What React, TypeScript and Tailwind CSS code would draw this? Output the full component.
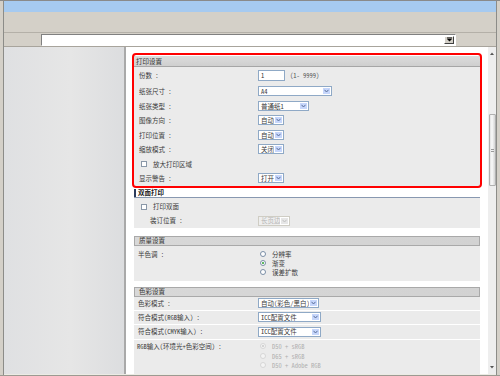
import React from "react";

function Chev({ color = "#4b5f8c" }: { color?: string }) {
  return (
    <svg width="5" height="4" viewBox="0 0 5 4">
      <path d="M0.5 0.8 L2.5 3 L4.5 0.8" stroke={color} strokeWidth="1" fill="none" />
    </svg>
  );
}

function Select({ wc, text, disabled }: { wc: string; text: string; disabled?: boolean }) {
  return (
    <div
      className={
        "flex h-[10px] items-stretch border " +
        wc +
        (disabled ? " border-[#cfcdc4] bg-[#eeeeee]" : " border-[#8fa9c6] bg-white")
      }
    >
      <div
        className={
          "flex-1 flex items-center pl-[2px] leading-none whitespace-nowrap overflow-hidden " +
          (disabled ? "text-[#b5b5b5]" : "text-[#3a3a3a]")
        }
      >
        {text}
      </div>
      <div
        className={
          "w-[9px] flex items-center justify-center border border-white " +
          (disabled ? "bg-[#e6e6e6]" : "bg-[#c6d6fb]")
        }
      >
        <Chev color={disabled ? "#c0c0c0" : "#5a6e98"} />
      </div>
    </div>
  );
}

function Checkbox() {
  return <div className="w-[6px] h-[6px] border border-[#8a98a8] bg-white" />;
}

function Radio({ checked, disabled }: { checked?: boolean; disabled?: boolean }) {
  return (
    <div
      className={
        "w-[6px] h-[6px] rounded-full border flex items-center justify-center " +
        (disabled ? "border-[#d6d6d6] bg-[#f4f4f4]" : "border-[#7a8ea6] bg-white")
      }
    >
      {checked && (
        <div className={"w-[2px] h-[2px] rounded-full " + (disabled ? "bg-[#c8c8c8]" : "bg-[#2aa02a]")} />
      )}
    </div>
  );
}

function Row({ label, children, h = "h-[14.5px]" }: { label: string; children?: React.ReactNode; h?: string }) {
  return (
    <div className={"flex items-center " + h}>
      <div className="w-[124px] pl-[5px] whitespace-nowrap text-[#3a3a3a]">{label}</div>
      <div className="flex items-center">{children}</div>
    </div>
  );
}

function GrayHeader({ title }: { title: string }) {
  return (
    <div className="h-[10px] flex items-center pl-[4px] bg-[linear-gradient(to_right,#d8d8d8,#d2d2d2)] border border-[#a9a9a9] text-[#333]">
      {title}
    </div>
  );
}

export default function App() {
  return (
    <div className="w-[500px] h-[376px] overflow-hidden bg-[#d4d0c8] flex flex-col border-t border-[#8a8a8a] font-['Noto_Sans_Mono_CJK_SC','Noto_Sans_CJK_SC',monospace] text-[6.5px] leading-none">
      <div className="flex-1 flex flex-col ml-[3px] mr-[3px] border-l border-r border-[#8c8c88]">
        {/* title bar */}
        <div className="h-[11px] bg-[#a6caf0]" />
        {/* toolbar */}
        <div className="h-[20px] bg-[#d4d0c8]" />
        <div className="h-px bg-[#b4b0a8]" />
        {/* address row */}
        <div className="h-[13px] flex items-center bg-[#d4d0c8]">
          <div className="w-[37px]" />
          <div className="w-[415px] h-[12px] flex items-stretch bg-white border-t border-l border-[#808080] border-b border-r border-b-white border-r-white">
            <div className="flex-1" />
            <div className="w-[10px] m-px flex items-center justify-center bg-[#d4d0c8] border border-t-white border-l-white border-b-[#404040] border-r-[#404040]">
              <svg width="5" height="5" viewBox="0 0 5 5">
                <rect x="0" y="0.5" width="5" height="1" fill="#000" />
                <path d="M0 2 L5 2 L2.5 4.5 Z" fill="#000" />
              </svg>
            </div>
          </div>
          <div className="flex-1" />
        </div>
        <div className="h-px bg-[#a8a49c]" />
        {/* main */}
        <div className="flex-1 flex min-h-0">
          <div className="w-[120px] bg-[linear-gradient(to_right,#dfe0e2,#e6e6e6_55%,#dcdddf)]" />
          <div className="w-[2px] bg-[#a9a9a9]" />
          <div className="flex-1 bg-white pt-[9px] pl-[8px] pr-[8px] overflow-hidden">
            {/* section 1 */}
            <div className="relative">
              <div className="absolute -top-[3px] -left-[2px] -right-[2px] -bottom-[2px] border-2 border-[#ff0000] rounded-[4px]" />
              <div className="h-[11px] flex items-center pl-[2px] bg-[linear-gradient(to_bottom,#dcdcdc,#cfcfcf)] border-b border-[#a6a6a6] text-[#333]">
                打印设置
              </div>
              <div className="bg-[#ebebeb]">
                <Row label="份数 :" h="h-[17px]">
                  <div className="w-[27px] h-[11px] border border-[#8fa9c6] bg-white flex items-center pl-[2px] text-[#333]">1</div>
                  <span className="ml-[5px] text-[#555]">(1- 9999)</span>
                </Row>
                <Row label="纸张尺寸 :">
                  <Select wc="w-[74px]" text="A4" />
                </Row>
                <Row label="纸张类型 :">
                  <Select wc="w-[51px]" text="普通纸1" />
                </Row>
                <Row label="图像方向 :">
                  <Select wc="w-[26px]" text="自动" />
                </Row>
                <Row label="打印位置 :">
                  <Select wc="w-[26px]" text="自动" />
                </Row>
                <Row label="缩放模式 :">
                  <Select wc="w-[26px]" text="关闭" />
                </Row>
                <div className="flex items-center h-[14.5px] pl-[7px] text-[#3a3a3a]">
                  <Checkbox />
                  <span className="ml-[6px]">放大打印区域</span>
                </div>
                <Row label="显示警告 :">
                  <Select wc="w-[26px]" text="打开" />
                </Row>
              </div>
            </div>

            {/* section 2 */}
            <div className="mt-[3px]">
              <div className="h-[9px] flex items-center border-b border-[#8898b0]">
                <div className="w-[2px] h-full bg-[#2c3c5c]" />
                <span className="ml-[2px] font-bold text-[#1a1a1a]">双面打印</span>
              </div>
              <div className="bg-[#ebebeb] pt-[2px]">
                <div className="flex items-center h-[14px] pl-[7px] text-[#3a3a3a]">
                  <Checkbox />
                  <span className="ml-[6px]">打印双面</span>
                </div>
                <div className="flex items-center h-[14px]">
                  <div className="w-[124px] pl-[16px] text-[#3a3a3a]">装订位置 :</div>
                  <Select wc="w-[32px]" text="长页边" disabled />
                </div>
              </div>
            </div>

            {/* section 3 */}
            <div className="mt-[8px]">
              <GrayHeader title="质量设置" />
              <div className="bg-[#ebebeb] pt-[4px] pb-[4px] flex">
                <div className="w-[124px] pl-[4px] h-[9px] flex items-center text-[#3a3a3a]">半色调 :</div>
                <div className="flex flex-col">
                  {[
                    ["分辨率", false],
                    ["渐变", true],
                    ["误差扩散", false],
                  ].map(([t, c]) => (
                    <div key={t as string} className="flex items-center h-[9px] pl-[2px]">
                      <Radio checked={c as boolean} />
                      <span className="ml-[6px] text-[#3a3a3a]">{t as string}</span>
                    </div>
                  ))}
                </div>
              </div>
            </div>

            {/* section 4 */}
            <div className="mt-[6px]">
              <GrayHeader title="色彩设置" />
              <div className="bg-[#ebebeb]">
                <div className="flex items-center h-[14px] border-b border-white">
                  <div className="w-[124px] pl-[4px] text-[#3a3a3a]">色彩模式 :</div>
                  <Select wc="w-[61px]" text="自动(彩色/黑白)" />
                </div>
                <div className="flex items-center h-[14px] border-b border-white">
                  <div className="w-[124px] pl-[4px] text-[#3a3a3a]">符合模式(RGB输入) :</div>
                  <Select wc="w-[63px]" text="ICC配置文件" />
                </div>
                <div className="flex items-center h-[15px] border-b border-white">
                  <div className="w-[124px] pl-[4px] text-[#3a3a3a]">符合模式(CMYK输入) :</div>
                  <Select wc="w-[63px]" text="ICC配置文件" />
                </div>
                <div className="flex pt-[2px] pb-[4px]">
                  <div className="w-[124px] pl-[3px] h-[9.5px] flex items-center text-[#3a3a3a] whitespace-nowrap">RGB输入(环境光+色彩空间) :</div>
                  <div className="flex flex-col">
                    {[
                      ["D50 + sRGB", true],
                      ["D65 + sRGB", false],
                      ["D50 + Adobe RGB", false],
                    ].map(([t, c]) => (
                      <div key={t as string} className="flex items-center h-[9.5px] pl-[2px]">
                        <Radio checked={c as boolean} disabled />
                        <span className="ml-[6px] text-[#b0b0b0] whitespace-nowrap">{t as string}</span>
                      </div>
                    ))}
                  </div>
                </div>
              </div>
            </div>
          </div>
          {/* scrollbar */}
          <div className="w-[8px] bg-[#eeeeee] flex flex-col items-center">
            <div className="h-[13px] flex items-center justify-center">
              <svg width="4" height="3" viewBox="0 0 4 3">
                <path d="M0 3 L2 0.5 L4 3 Z" fill="#555" />
              </svg>
            </div>
            <div className="h-[54px]" />
            <div className="w-[7px] h-[72px] rounded-[1px] border border-[#b0b0b0] bg-[linear-gradient(to_right,#e2e2e2,#fafafa_40%,#d4d4d4)] flex items-center justify-center">
              <div className="w-[3px] h-[3px] border-t border-b border-[#9a9a9a]" />
            </div>
            <div className="flex-1" />
            <div className="h-[13px] flex items-center justify-center">
              <svg width="4" height="3" viewBox="0 0 4 3">
                <path d="M0 0 L4 0 L2 2.5 Z" fill="#555" />
              </svg>
            </div>
          </div>
        </div>
        <div className="h-px bg-[#ecebe4]" />
      </div>
      <div className="h-[4px] bg-[#d4d0c8] border-b border-[#9c9a92]" />
    </div>
  );
}
